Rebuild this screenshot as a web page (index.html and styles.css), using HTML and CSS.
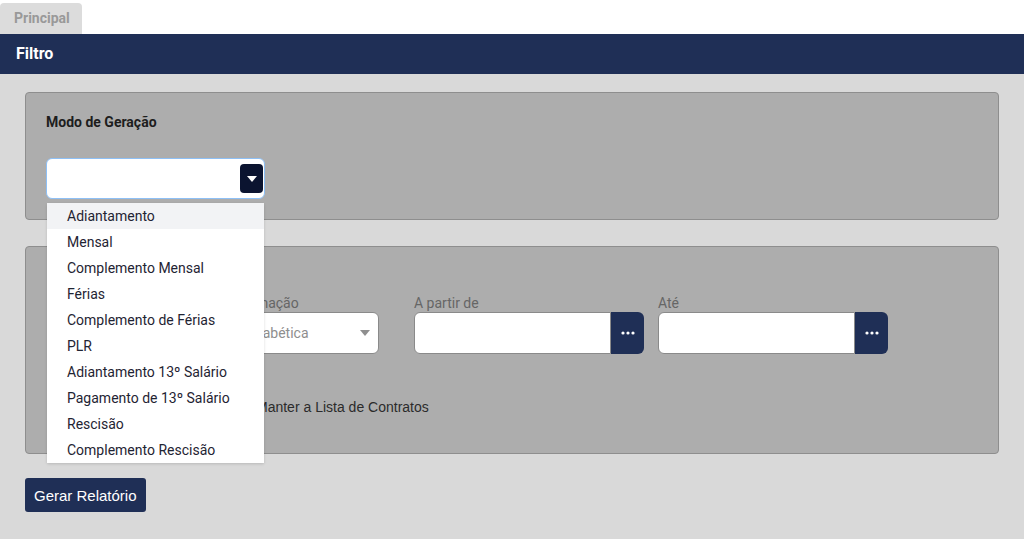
FILE: index.html
```html
<!DOCTYPE html>
<html lang="pt-BR">
<head>
    <meta charset="UTF-8">
    <meta name="viewport" content="width=device-width, initial-scale=1.0">
    <title>Filtro</title>
    <link rel="stylesheet" href="styles.css">
</head>
<body>
    <div class="tabs">
        <span class="tab">Principal</span>
    </div>

    <div class="bar">Filtro</div>

    <main class="content">
        <section class="panel panel-mode">
            <h3 class="panel-title">Modo de Geração</h3>
            <div class="combo">
                <div class="combo-box">
                    <span class="combo-btn">
                        <svg width="10" height="6" viewBox="0 0 10 6"><path d="M0 0h10L5 6z" fill="#fff"/></svg>
                    </span>
                </div>
                <ul class="combo-list">
                    <li class="active">Adiantamento</li>
                    <li>Mensal</li>
                    <li>Complemento Mensal</li>
                    <li>Férias</li>
                    <li>Complemento de Férias</li>
                    <li>PLR</li>
                    <li>Adiantamento 13º Salário</li>
                    <li>Pagamento de 13º Salário</li>
                    <li>Rescisão</li>
                    <li>Complemento Rescisão</li>
                </ul>
            </div>
        </section>

        <section class="panel panel-params">
            <div class="fields">
                <div class="field field-order">
                    <label>Tipo de Ordenação</label>
                    <div class="select">
                        <span>Ordem Alfabética</span>
                        <svg width="10" height="6" viewBox="0 0 10 6"><path d="M0 0h10L5 6z" fill="#8f8f8f"/></svg>
                    </div>
                </div>
                <div class="field field-date">
                    <label>A partir de</label>
                    <div class="date">
                        <div class="date-input"></div>
                        <span class="date-btn">
                            <svg width="14" height="4" viewBox="0 0 14 4"><circle cx="2" cy="2" r="1.6" fill="#fff"/><circle cx="7" cy="2" r="1.6" fill="#fff"/><circle cx="12" cy="2" r="1.6" fill="#fff"/></svg>
                        </span>
                    </div>
                </div>
                <div class="field field-date">
                    <label>Até</label>
                    <div class="date">
                        <div class="date-input"></div>
                        <span class="date-btn">
                            <svg width="14" height="4" viewBox="0 0 14 4"><circle cx="2" cy="2" r="1.6" fill="#fff"/><circle cx="7" cy="2" r="1.6" fill="#fff"/><circle cx="12" cy="2" r="1.6" fill="#fff"/></svg>
                        </span>
                    </div>
                </div>
            </div>
            <label class="check">
                <input type="checkbox">
                <span>Manter a Lista de Contratos</span>
            </label>
        </section>

        <button class="button">Gerar Relatório</button>
    </main>
</body>
</html>
```

FILE: styles.css
```css
:root {
    --navy: #1f2f56;
    --dark: #0b1430;
    --page: #d9d9d9;
    --panel: #adadad;
    --panel-border: #8e8e8e;
}
body {
    margin: 0;
    font-family: Roboto, "Noto Sans", sans-serif;
    background-color: var(--page);
    color: #212121;
    height: 539px;
    overflow: hidden;
}
.tabs {
    background-color: white;
    height: 34px;
    display: flex;
    align-items: flex-end;
}
.tab {
    background-color: #dcdcdc;
    color: #999;
    font-size: 14px;
    font-weight: 700;
    width: 82px;
    height: 31px;
    box-sizing: border-box;
    padding-left: 14px;
    line-height: 31px;
    border-radius: 4px 4px 0 0;
}
.bar {
    background-color: var(--navy);
    color: white;
    font-size: 16px;
    font-weight: 700;
    height: 40px;
    line-height: 39px;
    padding-left: 16px;
}
.content {
    padding: 18px 25px 0;
}
.panel {
    background-color: var(--panel);
    border: 1px solid var(--panel-border);
    border-radius: 4px;
    padding: 19px 20px 20px;
}
.panel-title {
    margin: 0;
    font-size: 14px;
    font-weight: 700;
    line-height: 20px;
    color: #1d1d1d;
}
.panel-mode {
    height: 128px;
    box-sizing: border-box;
}
.combo {
    position: relative;
    margin-top: 26px;
    width: 219px;
}
.combo-box {
    height: 41px;
    box-sizing: border-box;
    background-color: white;
    border: 1px solid #8ec0f6;
    border-radius: 6px;
    display: flex;
    justify-content: flex-end;
    align-items: center;
    padding-right: 1px;
}
.combo-btn {
    width: 23px;
    height: 29px;
    background-color: var(--dark);
    border-radius: 4px;
    display: flex;
    align-items: center;
    justify-content: center;
}
.combo-list {
    position: absolute;
    top: 45px;
    left: 1px;
    width: 217px;
    margin: 0;
    padding: 0;
    list-style: none;
    background-color: white;
    border-radius: 3px 3px 0 0;
    box-shadow: 0 1px 3px rgba(0,0,0,0.15);
    z-index: 10;
}
.combo-list li {
    height: 26px;
    line-height: 26px;
    padding-left: 20px;
    font-size: 14px;
    color: #1f2433;
}
.combo-list li.active {
    background-color: #f2f3f5;
}
.panel-params {
    margin-top: 26px;
    height: 208px;
    box-sizing: border-box;
    padding-top: 29px;
}
.fields {
    display: flex;
    margin-top: 19px;
    padding-left: 142px;
}
.field label {
    display: block;
    font-size: 14px;
    line-height: 17px;
    color: #666;
    white-space: nowrap;
}
.field-order {
    width: 191px;
    margin-right: 35px;
}
.field-order label {
    margin-left: -7px;
}
.field-date {
    width: 230px;
    margin-right: 14px;
}
.select, .date-input {
    height: 42px;
    box-sizing: border-box;
    background-color: white;
    border: 1px solid #8a8a8a;
    border-radius: 6px;
}
.select {
    display: flex;
    align-items: center;
    justify-content: space-between;
    padding: 0 8px 0 11px;
    font-size: 14px;
    color: #8e8e8e;
}
.date {
    display: flex;
    height: 42px;
}
.date-input {
    flex: 1;
    border-radius: 6px 0 0 6px;
}
.date-btn {
    width: 33px;
    background-color: var(--navy);
    border-radius: 0 6px 6px 0;
    display: flex;
    align-items: center;
    justify-content: center;
}
.check {
    display: flex;
    align-items: center;
    margin-top: 45px;
    margin-left: 191px;
    font-family: "Liberation Sans", Arial, sans-serif;
    font-size: 14px;
    color: #2b2b2b;
}
.check input {
    margin: 0 6px 0 0;
}
.button {
    margin-top: 24px;
    background-color: var(--navy);
    color: white;
    border: none;
    border-radius: 3px;
    font-family: "Liberation Sans", Arial, sans-serif;
    font-size: 15px;
    height: 34px;
    padding: 0 9px;
    cursor: pointer;
}
```
